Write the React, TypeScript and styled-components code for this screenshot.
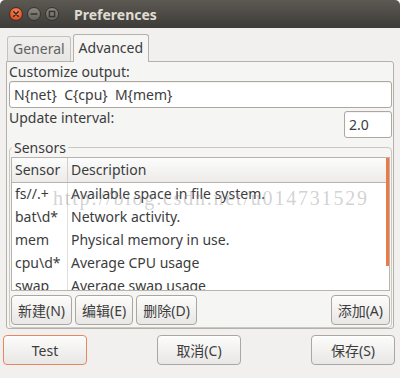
import React from "react";
import styled, { createGlobalStyle } from "styled-components";

const UI_FONT = `"Noto Sans", "Noto Sans CJK SC", sans-serif`;

const GlobalStyle = createGlobalStyle`
  html, body { margin: 0; padding: 0; background: #ffffff; }
  * { box-sizing: border-box; }
`;

const Window = styled.div`
  position: relative;
  width: 400px;
  height: 378px;
  background: #f1f0ef;
  display: flex;
  flex-direction: column;
  overflow: hidden;
  border-radius: 5px 5px 0 0;
  font-family: ${UI_FONT};
  font-size: 14px;
  color: #3c3c3c;
`;

const TitleBar = styled.div`
  height: 28px;
  flex: none;
  display: flex;
  align-items: center;
  padding-left: 9px;
  background: linear-gradient(#5c5953, #3e3c38);
`;

const Controls = styled.div`
  display: flex;
  gap: 4px;
`;

const Title = styled.div`
  margin-left: 15px;
  font-weight: bold;
  color: #dfdbd2;
  font-size: 14px;
  line-height: 19px;
`;

const Body = styled.div`
  padding: 6px 6px 0 6px;
  display: flex;
  flex-direction: column;
`;

const TabRow = styled.div`
  position: relative;
  z-index: 1;
  display: flex;
  align-items: flex-end;
  gap: 2px;
  height: 28px;
  margin: 0 0 -1px 1px;
`;

const Tab = styled.div<{ $active?: boolean }>`
  height: ${(p) => (p.$active ? 28 : 25)}px;
  margin-bottom: ${(p) => (p.$active ? 0 : 1)}px;
  padding: ${(p) => (p.$active ? "3px 5px 0" : "2px 5px 0")};
  line-height: 19px;
  border: 1px solid ${(p) => (p.$active ? "#b5b1aa" : "#c6c2bc")};
  border-bottom: none;
  border-radius: 3px 3px 0 0;
  background: ${(p) => (p.$active ? "#f5f5f4" : "linear-gradient(#f0efee, #e7e6e4)")};
  color: ${(p) => (p.$active ? "#3c3c3c" : "#626262")};
`;

const Panel = styled.div`
  height: 268px;
  border: 1px solid #b5b1aa;
  border-radius: 0 3px 3px 3px;
  background: #f5f5f4;
  padding: 0 1px 0 2px;
  display: flex;
  flex-direction: column;
`;

const FieldLabel = styled.div`
  height: 19px;
  line-height: 19px;
  white-space: nowrap;
`;

const Entry = styled.div<{ $width?: number }>`
  height: 27px;
  width: ${(p) => (p.$width ? `${p.$width}px` : "auto")};
  border: 1px solid #aca79f;
  border-radius: 3px;
  background: #ffffff;
  padding: 0 4px;
  display: flex;
  align-items: center;
  white-space: pre;
  box-shadow: inset 0 1px 1px rgba(0, 0, 0, 0.05);
`;

const IntervalRow = styled.div`
  height: 30px;
  display: flex;
  justify-content: space-between;
  align-items: flex-start;
`;

const SpinWrap = styled.div`
  margin-top: 3px;
`;

const Frame = styled.fieldset`
  margin: 1px 0 0;
  padding: 1px 1px 2px;
  border: 1px solid #cbc7c1;
  border-radius: 4px;
  min-width: 0;
`;

const Legend = styled.legend`
  margin-left: 1px;
  padding: 0 2px;
  line-height: 17px;
`;

const FrameInner = styled.div`
  display: flex;
  flex-direction: column;
  gap: 4px;
`;

const Tree = styled.div`
  position: relative;
  height: 134px;
  border: 1px solid #b9b5ae;
  background: #ffffff;
  overflow: hidden;
  display: flex;
  flex-direction: column;
`;

const HeaderRow = styled.div`
  flex: none;
  display: grid;
  grid-template-columns: 56px 1fr;
  height: 25px;
  border-bottom: 1px solid #b9b5ae;
  background: linear-gradient(#fcfcfc, #ecebe9);
`;

const HeaderCell = styled.div<{ $first?: boolean }>`
  padding-left: 3px;
  line-height: 24px;
  border-right: ${(p) => (p.$first ? "1px solid #d3d0cb" : "none")};
  white-space: nowrap;
`;

const Rows = styled.div`
  flex: 1;
  display: grid;
  grid-template-columns: 56px 1fr;
  grid-auto-rows: 23px;
  background: linear-gradient(to right, transparent 55px, #e2e0dc 55px, #e2e0dc 56px, transparent 56px);
`;

const Cell = styled.div`
  padding: 1px 0 0 3px;
  line-height: 19px;
  white-space: nowrap;
  overflow: hidden;
`;

const ScrollIndicator = styled.div`
  position: absolute;
  right: 0;
  top: 0;
  width: 3px;
  height: 108px;
  background: #f07746;
`;

const ButtonRow = styled.div`
  display: flex;
  gap: 3px;
`;

const Spacer = styled.div`
  flex: 1;
`;

const Button = styled.button<{ $default?: boolean; $fixed?: boolean }>`
  font-family: ${UI_FONT};
  font-size: 14px;
  color: #3c3c3c;
  height: 30px;
  width: ${(p) => (p.$fixed ? "84px" : "auto")};
  padding: 0 6px;
  margin: 0;
  border: 1px solid ${(p) => (p.$default ? "#e8875d" : "#aba69f")};
  border-radius: 4px;
  background: linear-gradient(#fcfcfb, #e8e7e5);
  box-shadow: inset 0 1px 0 #ffffff;
  white-space: nowrap;
`;

const Footer = styled.div`
  display: flex;
  justify-content: space-between;
  padding: 6px 5px 0 3px;
`;

const Watermark = styled.div`
  position: absolute;
  left: 53px;
  top: 187px;
  font-family: "Liberation Serif", serif;
  font-size: 20px;
  letter-spacing: 1.8px;
  color: rgba(140, 140, 140, 0.4);
  white-space: nowrap;
  pointer-events: none;
`;

const CloseIcon = () => (
  <svg width="14" height="14" viewBox="0 0 14 14">
    <defs>
      <radialGradient id="closeGrad" cx="50%" cy="35%" r="65%">
        <stop offset="0" stopColor="#f98a5c" />
        <stop offset="1" stopColor="#d8461a" />
      </radialGradient>
    </defs>
    <circle cx="7" cy="7" r="6.5" fill="url(#closeGrad)" stroke="#3b2e27" strokeWidth="1" />
    <path d="M4.8 4.8 L9.2 9.2 M9.2 4.8 L4.8 9.2" stroke="#3a2a22" strokeWidth="1.6" strokeLinecap="round" />
  </svg>
);

const GreyCircle = ({ children }: { children: React.ReactNode }) => (
  <svg width="14" height="14" viewBox="0 0 14 14">
    <defs>
      <linearGradient id="greyGrad" x1="0" y1="0" x2="0" y2="1">
        <stop offset="0" stopColor="#8d8982" />
        <stop offset="1" stopColor="#64615b" />
      </linearGradient>
    </defs>
    <circle cx="7" cy="7" r="6.5" fill="url(#greyGrad)" stroke="#34322f" strokeWidth="1" />
    {children}
  </svg>
);

const sensors: [string, string][] = [
  ["fs//.+", "Available space in file system."],
  ["bat\\d*", "Network activity."],
  ["mem", "Physical memory in use."],
  ["cpu\\d*", "Average CPU usage"],
  ["swap", "Average swap usage"],
];

export default function App() {
  return (
    <>
      <GlobalStyle />
      <Window>
        <TitleBar>
          <Controls>
            <CloseIcon />
            <GreyCircle>
              <path d="M4.2 7 H9.8" stroke="#34322f" strokeWidth="1.6" strokeLinecap="round" />
            </GreyCircle>
            <GreyCircle>
              <rect x="4.4" y="4.4" width="5.2" height="5.2" fill="none" stroke="#34322f" strokeWidth="1.4" />
            </GreyCircle>
          </Controls>
          <Title>Preferences</Title>
        </TitleBar>
        <Body>
          <TabRow>
            <Tab>General</Tab>
            <Tab $active>Advanced</Tab>
          </TabRow>
          <Panel>
            <FieldLabel>Customize output:</FieldLabel>
            <Entry>{"N{net}  C{cpu}  M{mem}"}</Entry>
            <IntervalRow>
              <FieldLabel>Update interval:</FieldLabel>
              <SpinWrap>
                <Entry $width={48}>2.0</Entry>
              </SpinWrap>
            </IntervalRow>
            <Frame>
              <Legend>Sensors</Legend>
              <FrameInner>
                <Tree>
                  <HeaderRow>
                    <HeaderCell $first>Sensor</HeaderCell>
                    <HeaderCell>Description</HeaderCell>
                  </HeaderRow>
                  <Rows>
                    {sensors.map(([name, desc]) => (
                      <React.Fragment key={name}>
                        <Cell>{name}</Cell>
                        <Cell>{desc}</Cell>
                      </React.Fragment>
                    ))}
                  </Rows>
                  <ScrollIndicator />
                </Tree>
                <ButtonRow>
                  <Button>新建(N)</Button>
                  <Button>编辑(E)</Button>
                  <Button>删除(D)</Button>
                  <Spacer />
                  <Button>添加(A)</Button>
                </ButtonRow>
              </FrameInner>
            </Frame>
          </Panel>
        </Body>
        <Footer>
          <Button $fixed $default>Test</Button>
          <Button $fixed>取消(C)</Button>
          <Button $fixed>保存(S)</Button>
        </Footer>
        <Watermark>http://blog.csdn.net/u014731529</Watermark>
      </Window>
    </>
  );
}
